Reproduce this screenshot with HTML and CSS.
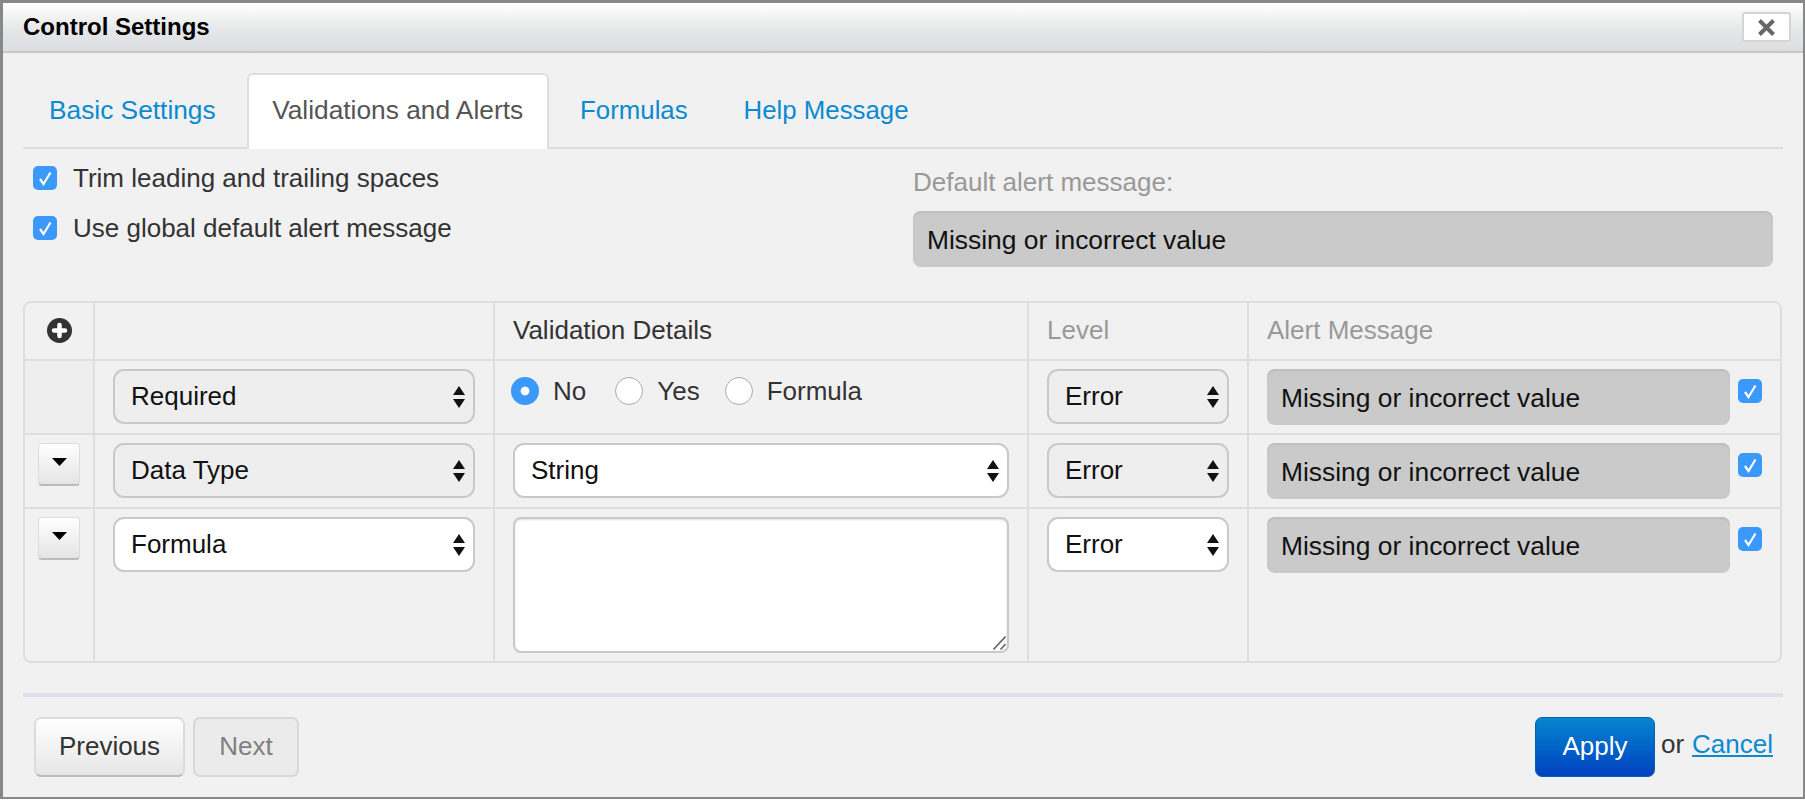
FILE: index.html
```html
<!DOCTYPE html>
<html lang="en">
<head>
    <meta charset="UTF-8">
    <meta name="viewport" content="width=device-width, initial-scale=1.0">
    <title>Control Settings</title>
    <link rel="stylesheet" href="styles.css">
</head>
<body>
    <svg class="svg-defs" width="0" height="0" aria-hidden="true">
        <symbol id="updown" viewBox="0 0 12 22">
            <path d="M6 0L12 9H0zM0 13H12L6 22z"/>
        </symbol>
        <symbol id="check" viewBox="0 0 24 24">
            <path d="M7 13L10.5 18L17.5 6.5" fill="none" stroke="#fff" stroke-width="2.2"/>
        </symbol>
    </svg>

    <div class="dialog">
        <div class="title-bar">
            <h1>Control Settings</h1>
            <button class="close-btn" aria-label="Close">
                <svg width="19" height="17" viewBox="0 0 19 17"><path d="M2.5 1.5L16.5 15.5M16.5 1.5L2.5 15.5" stroke="#666" stroke-width="4" fill="none"/></svg>
            </button>
        </div>

        <div class="content">
            <ul class="tabs">
                <li><a href="#">Basic Settings</a></li>
                <li class="active"><a href="#">Validations and Alerts</a></li>
                <li><a href="#">Formulas</a></li>
                <li><a href="#">Help Message</a></li>
            </ul>

            <div class="options">
                <div class="options-left">
                    <label class="check-row"><span class="checkbox"><svg width="24" height="24"><use href="#check"/></svg></span>Trim leading and trailing spaces</label>
                    <label class="check-row"><span class="checkbox"><svg width="24" height="24"><use href="#check"/></svg></span>Use global default alert message</label>
                </div>
                <div class="options-right">
                    <div class="muted default-label">Default alert message:</div>
                    <div class="field-disabled">Missing or incorrect value</div>
                </div>
            </div>

            <div class="table-wrap">
                <table class="rules">
                    <colgroup>
                        <col class="col-move"><col class="col-type"><col class="col-details"><col class="col-level"><col class="col-alert">
                    </colgroup>
                    <tr class="head-row">
                        <th class="move-cell">
                            <svg width="25" height="25" viewBox="0 0 25 25"><circle cx="12.5" cy="12.5" r="12.5" fill="#333"/><path d="M12.5 7V18M7 12.5H18" stroke="#fff" stroke-width="4.5" stroke-linecap="round"/></svg>
                        </th>
                        <th></th>
                        <th>Validation Details</th>
                        <th class="muted">Level</th>
                        <th class="muted">Alert Message</th>
                    </tr>
                    <tr class="row-first">
                        <td class="move-cell shaded"></td>
                        <td><div class="select gray">Required<svg width="12" height="22"><use href="#updown"/></svg></div></td>
                        <td>
                            <div class="radios">
                                <span class="radio on"></span><span class="radio-label">No</span>
                                <span class="radio"></span><span class="radio-label tight">Yes</span>
                                <span class="radio"></span><span class="radio-label">Formula</span>
                            </div>
                        </td>
                        <td><div class="select gray">Error<svg width="12" height="22"><use href="#updown"/></svg></div></td>
                        <td><div class="alert-cell"><div class="field-disabled">Missing or incorrect value</div><span class="checkbox"><svg width="24" height="24"><use href="#check"/></svg></span></div></td>
                    </tr>
                    <tr>
                        <td class="move-cell"><button class="move-btn"><svg width="15" height="8" viewBox="0 0 15 8"><path d="M0 0H15L7.5 8z"/></svg></button></td>
                        <td><div class="select gray">Data Type<svg width="12" height="22"><use href="#updown"/></svg></div></td>
                        <td><div class="select">String<svg width="12" height="22"><use href="#updown"/></svg></div></td>
                        <td><div class="select gray">Error<svg width="12" height="22"><use href="#updown"/></svg></div></td>
                        <td><div class="alert-cell"><div class="field-disabled">Missing or incorrect value</div><span class="checkbox"><svg width="24" height="24"><use href="#check"/></svg></span></div></td>
                    </tr>
                    <tr class="row-last">
                        <td class="move-cell"><button class="move-btn"><svg width="15" height="8" viewBox="0 0 15 8"><path d="M0 0H15L7.5 8z"/></svg></button></td>
                        <td><div class="select">Formula<svg width="12" height="22"><use href="#updown"/></svg></div></td>
                        <td>
                            <div class="formula-wrap">
                                <textarea class="formula"></textarea>
                                <svg class="grip" width="13" height="14" viewBox="0 0 13 14"><path d="M0.5 13.5L12.5 0.5M7.5 13.5L12.5 8" stroke="#666" stroke-width="1.6" fill="none"/></svg>
                            </div>
                        </td>
                        <td><div class="select">Error<svg width="12" height="22"><use href="#updown"/></svg></div></td>
                        <td><div class="alert-cell"><div class="field-disabled">Missing or incorrect value</div><span class="checkbox"><svg width="24" height="24"><use href="#check"/></svg></span></div></td>
                    </tr>
                </table>
            </div>

            <div class="footer">
                <div class="footer-left">
                    <button class="btn btn-prev">Previous</button>
                    <button class="btn btn-disabled">Next</button>
                </div>
                <div class="footer-right">
                    <button class="btn btn-primary">Apply</button>
                    <span class="or">or</span>
                    <a class="cancel" href="#">Cancel</a>
                </div>
            </div>
        </div>
    </div>
</body>
</html>
```

FILE: styles.css
```css
* {
    box-sizing: border-box;
}

html, body {
    margin: 0;
    height: 100%;
}

body {
    font-family: "Liberation Sans", Arial, sans-serif;
    font-size: 26px;
    color: #333;
    background: #fff;
    overflow: hidden;
}

.svg-defs {
    display: block;
    height: 0;
}

.muted {
    color: #999;
}

.dialog {
    height: 799px;
    background: #f1f1f1;
    border-style: solid;
    border-color: #888;
    border-width: 3px 2px 2px 3px;
}

.title-bar {
    height: 50px;
    display: flex;
    align-items: center;
    justify-content: space-between;
    padding: 0 12px 0 20px;
    background: linear-gradient(#fff, #e6e7e8 55%, #dcdde0);
    border-bottom: 2px solid #c8c8ca;
}

.title-bar h1 {
    margin: 0;
    font-size: 24px;
    font-weight: bold;
    color: #000;
}

.close-btn {
    width: 49px;
    height: 30px;
    padding: 0;
    display: flex;
    align-items: center;
    justify-content: center;
    background: #fff;
    border: 2px solid #d4d4d4;
    border-radius: 3px;
}

.content {
    padding: 20px 20px 0 20px;
}

.tabs {
    list-style: none;
    margin: 0;
    padding: 0 0 0 1px;
    height: 76px;
    display: flex;
    gap: 6px;
    font-size: 25.8px;
    border-bottom: 2px solid #dedede;
}

.tabs li {
    height: 76px;
    padding: 0 23px;
    border: 2px solid transparent;
    border-bottom: none;
    line-height: 71px;
}

.tabs li:nth-child(-n+2) {
    font-size: 26.3px;
}

.tabs a {
    color: #0a8ad0;
    text-decoration: none;
}

.tabs .active {
    margin-left: 0.5px;
    padding-right: 24px;
    background: #fff;
    border-color: #dedede;
    border-radius: 6px 6px 0 0;
}

.tabs .active a {
    color: #555;
}

.options {
    display: flex;
    justify-content: space-between;
    padding: 0 10px;
}

.options-left {
    padding-top: 17px;
    display: flex;
    flex-direction: column;
    gap: 26px;
}

.check-row {
    display: flex;
    align-items: center;
    gap: 16px;
    height: 24px;
}

.checkbox {
    width: 24px;
    height: 24px;
    flex: none;
    display: block;
    background: #3b99fc;
    border-radius: 5px;
}

.checkbox svg {
    display: block;
}

.options-right {
    width: 860px;
}

.default-label {
    height: 62px;
    padding-top: 18px;
    line-height: 30px;
}

.field-disabled {
    height: 56px;
    padding: 2px 14px 0;
    display: flex;
    align-items: center;
    font-size: 26.4px;
    color: #111;
    background: #cacaca;
    border-radius: 8px;
    box-shadow: inset 0 2px 2px #bdbdbd;
}

.table-wrap {
    margin-top: 34px;
    width: 1759px;
    border: 2px solid #dedede;
    border-radius: 8px;
}

.rules {
    width: 100%;
    table-layout: fixed;
    border-collapse: collapse;
}

.col-move { width: 69px; }
.col-type { width: 400px; }
.col-details { width: 534px; }
.col-level { width: 220px; }

.rules th,
.rules td {
    padding: 8px 18px;
    border-left: 2px solid #dedede;
    border-top: 2px solid #dedede;
    vertical-align: top;
    text-align: left;
    font-weight: normal;
}

.rules th:first-child,
.rules td:first-child {
    border-left: none;
    padding: 8px 0;
    text-align: center;
}

.rules tr:first-child th {
    border-top: none;
}

.head-row th {
    height: 57px;
    padding-top: 0;
    padding-bottom: 2px;
    vertical-align: middle;
    line-height: 36px;
}

.rules .head-row th.move-cell {
    padding-top: 0;
    padding-bottom: 2px;
}

.move-cell svg {
    display: block;
    margin: 0 auto;
}

.rules td.shaded {
    background: #eee;
}

.select {
    height: 55px;
    padding: 0 8px 0 16px;
    display: flex;
    align-items: center;
    justify-content: space-between;
    color: #111;
    background: #fff;
    border: 2px solid #c9c9c9;
    border-radius: 11px;
}

.select.gray {
    background: #eee;
}

.select svg {
    fill: #111;
}

.radios {
    display: flex;
    align-items: center;
    height: 28px;
    margin-top: 8px;
    margin-left: -2px;
}

.radio {
    width: 28px;
    height: 28px;
    flex: none;
    background: #fff;
    border: 1px solid #aaa;
    border-radius: 50%;
}

.radio.on {
    background: #3b99fc radial-gradient(circle, #fff 4px, transparent 4.8px);
    border: none;
}

.radio-label {
    margin: 0 29px 0 14px;
}

.radio-label.tight {
    margin-right: 25px;
}

.alert-cell {
    display: flex;
    gap: 8px;
}

.alert-cell .field-disabled {
    flex: 1;
    min-width: 0;
}

.alert-cell .checkbox {
    margin-top: 10px;
}

.move-btn {
    width: 42px;
    height: 43px;
    padding: 0 0 5px;
    background: linear-gradient(#fff, #e4e4e4);
    border: 1px solid #ddd;
    border-bottom: 2px solid #bbb;
    border-radius: 4px;
}

.move-btn svg {
    margin: 0 auto;
}

.formula-wrap {
    position: relative;
}

.formula {
    display: block;
    width: 100%;
    height: 136px;
    background: #fff;
    border: 2px solid #c9c9c9;
    border-radius: 8px;
    box-shadow: inset 0 1px 2px #ddd;
    resize: none;
    outline: none;
}

.grip {
    position: absolute;
    right: 3px;
    bottom: 3px;
}

.footer {
    margin-top: 30px;
    padding: 20px 10px 0 11px;
    display: flex;
    justify-content: space-between;
    border-top: 4px solid #dedeec;
}

.footer-left {
    display: flex;
    gap: 8px;
}

.footer-right {
    display: flex;
    align-items: center;
}

.btn {
    height: 60px;
    width: 106px;
    padding: 0 0 2px;
    font-family: inherit;
    font-size: 26px;
    color: #333;
    background: linear-gradient(#fff, #e6e6e6);
    border: 2px solid #dcdcdc;
    border-bottom-color: #bbb;
    border-radius: 7px;
}

.btn-prev {
    width: 151px;
}

.btn-disabled {
    color: #808080;
    background: #ebebeb;
    border-color: #d8d8d8;
}

.btn-primary {
    width: 120px;
    color: #fff;
    background: linear-gradient(#0586cf, #0040c0);
    border: 1px solid #0562ad;
    border-radius: 7px;
}

.or {
    margin: 0 8px 0 6px;
    padding-bottom: 6px;
}

.cancel {
    color: #0a8ad0;
    padding-bottom: 6px;
}
```
